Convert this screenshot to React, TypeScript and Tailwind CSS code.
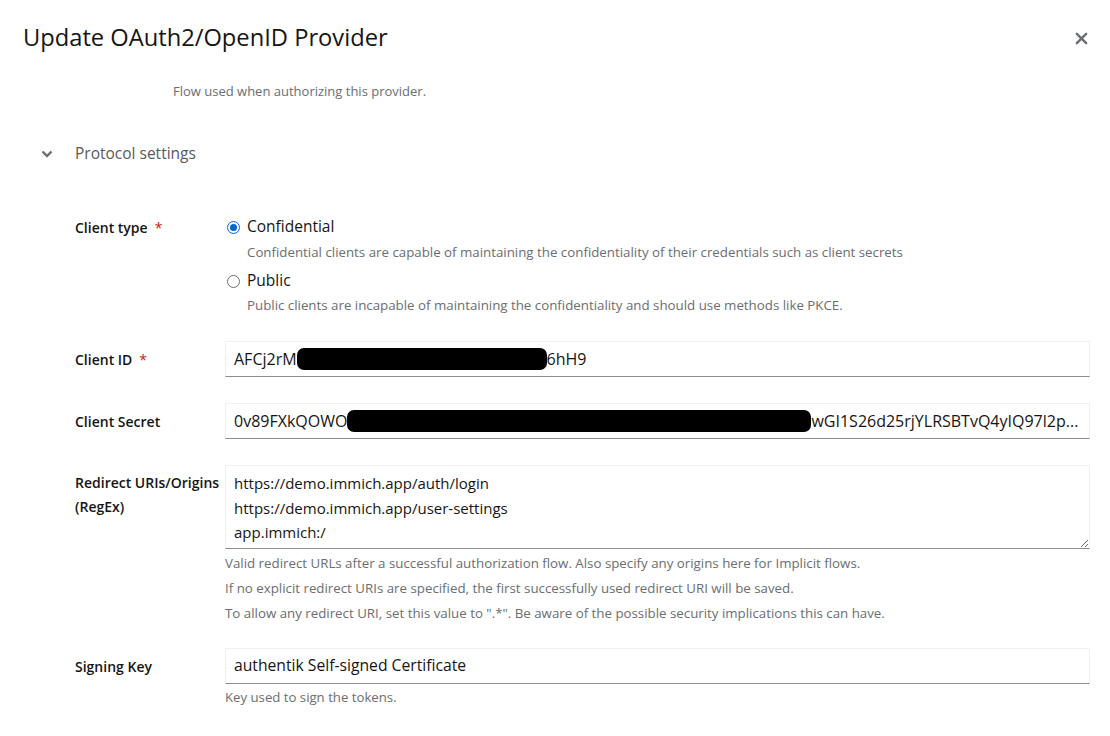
import React from "react";

const Redact = ({ w }: { w: number }) => (
  <span
    className="inline-block bg-black rounded-[7px] h-[22px] align-middle"
    style={{ width: w }}
  />
);

const Label = ({ text, req }: { text: string; req?: boolean }) => (
  <span className="text-[14px] font-semibold text-[#151515]">
    {text}
    {req && <span className="text-[#c9190b] font-normal ml-[7px]">*</span>}
  </span>
);

export default function App() {
  return (
    <div
      className="w-[1110px] h-[736px] bg-white overflow-hidden relative"
      style={{ fontFamily: '"Open Sans", sans-serif' }}
    >
      {/* Header */}
      <div className="flex items-center justify-between pl-[23px] pr-[22px] pt-[21px]">
        <h1 className="text-[23.7px] leading-[32px] text-[#151515]">Update OAuth2/OpenID Provider</h1>
        <svg width="13" height="13" viewBox="0 0 14 14" className="mt-[2px]">
          <path d="M2 2L12 12M12 2L2 12" stroke="#6a6e73" strokeWidth="2.6" strokeLinecap="round" />
        </svg>
      </div>

      <div className="pl-[173px] mt-[28px] text-[13px] leading-[20px] text-[#6a6e73]">
        Flow used when authorizing this provider.
      </div>

      {/* Expandable section */}
      <div className="flex items-center mt-[41px] pl-[41px] h-[24px]">
        <svg width="12" height="8" viewBox="0 0 12 8">
          <path d="M1.5 1.5L6 6L10.5 1.5" stroke="#6a6e73" strokeWidth="2.4" fill="none" />
        </svg>
        <span className="ml-[22px] text-[15.5px] text-[#57595c]">Protocol settings</span>
      </div>

      <div className="pl-[75px] pr-[20px] mt-[49px] flex flex-col">
        {/* Client type */}
        <div className="flex">
          <div className="w-[150px] h-[24px] flex items-center">
            <Label text="Client type" req />
          </div>
          <div className="flex flex-col pl-[1px]">
            <div className="flex items-center h-[24px]">
              <span className="w-[13px] h-[13px] rounded-full border border-[#0066cc] flex items-center justify-center ml-[1px]">
                <span className="w-[7px] h-[7px] rounded-full bg-[#0066cc]" />
              </span>
              <span className="ml-[7px] text-[15.5px] text-[#151515]">Confidential</span>
            </div>
            <div className="mt-[2px] h-[24px] flex items-center pl-[21px] text-[13.3px] text-[#6a6e73]">
              Confidential clients are capable of maintaining the confidentiality of their credentials such as client secrets
            </div>
            <div className="flex items-center h-[24px] mt-[4px]">
              <span className="w-[13px] h-[13px] rounded-full border border-[#6a6e73] ml-[1px]" />
              <span className="ml-[7px] text-[15.5px] text-[#151515]">Public</span>
            </div>
            <div className="mt-[1px] h-[24px] flex items-center pl-[21px] text-[13.3px] text-[#6a6e73]">
              Public clients are incapable of maintaining the confidentiality and should use methods like PKCE.
            </div>
          </div>
        </div>

        {/* Client ID */}
        <div className="flex items-center mt-[23px]">
          <div className="w-[150px]">
            <Label text="Client ID" req />
          </div>
          <div className="flex-1 h-[36px] border border-[#f0f0f0] border-b-[#8a8d90] flex items-center pl-[8px] text-[16px] text-[#151515] whitespace-nowrap overflow-hidden">
            <span>AFCj2rM</span>
            <Redact w={250} />
            <span>6hH9</span>
          </div>
        </div>

        {/* Client Secret */}
        <div className="flex items-center mt-[26px]">
          <div className="w-[150px]">
            <Label text="Client Secret" />
          </div>
          <div className="flex-1 h-[36px] border border-[#f0f0f0] border-b-[#8a8d90] flex items-center pl-[8px] text-[16px] text-[#151515] whitespace-nowrap overflow-hidden">
            <span>0v89FXkQOWO</span>
            <Redact w={464} />
            <span>wGI1S26d25rjYLRSBTvQ4yIQ97l2p...</span>
          </div>
        </div>

        {/* Redirect URIs */}
        <div className="flex mt-[26px]">
          <div className="w-[150px] pt-[6px] text-[14px] leading-[24px] font-semibold text-[#151515]">
            Redirect URIs/Origins
            <br />
            (RegEx)
          </div>
          <div className="flex-1 flex flex-col">
            <textarea
              readOnly
              className="w-full h-[84px] border border-[#f0f0f0] border-b-[#8a8d90] pl-[8px] pt-[5px] text-[15px] leading-[24.5px] text-[#151515] outline-none resize-y"
              style={{ fontFamily: '"Open Sans", sans-serif' }}
              defaultValue={"https://demo.immich.app/auth/login\nhttps://demo.immich.app/user-settings\napp.immich:/"}
            />
            <div className="text-[13.3px] leading-[25px] text-[#6a6e73] mt-[2px]">
              <div>Valid redirect URLs after a successful authorization flow. Also specify any origins here for Implicit flows.</div>
              <div>If no explicit redirect URIs are specified, the first successfully used redirect URI will be saved.</div>
              <div>To allow any redirect URI, set this value to ".*". Be aware of the possible security implications this can have.</div>
            </div>
          </div>
        </div>

        {/* Signing Key */}
        <div className="flex mt-[22px]">
          <div className="w-[150px] h-[36px] flex items-center">
            <Label text="Signing Key" />
          </div>
          <div className="flex-1 flex flex-col">
            <div className="h-[36px] border border-[#f0f0f0] border-b-[#8a8d90] flex items-center pl-[8px] text-[15.7px] text-[#151515]">
              authentik Self-signed Certificate
            </div>
            <div className="text-[13.2px] leading-[25px] text-[#6a6e73] mt-[1px]">Key used to sign the tokens.</div>
          </div>
        </div>
      </div>
    </div>
  );
}
